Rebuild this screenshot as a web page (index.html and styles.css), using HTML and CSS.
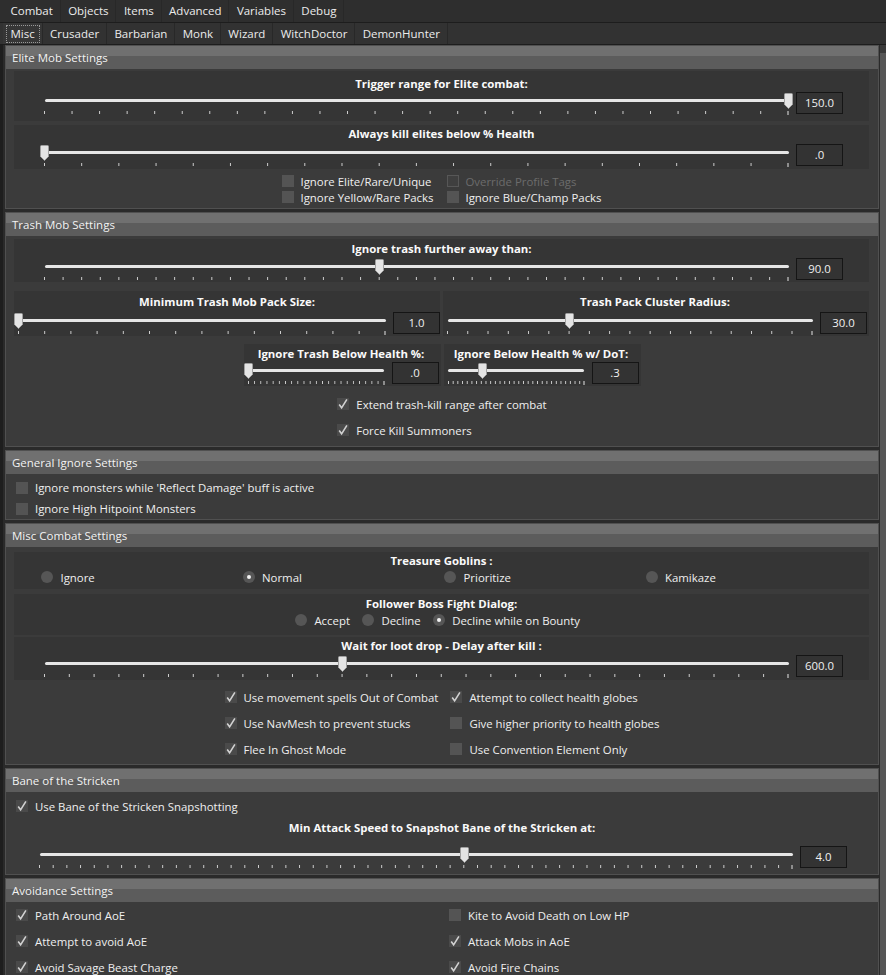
FILE: index.html
```html
<!DOCTYPE html>
<html>
<head>
<meta charset="utf-8">
<title>Combat Settings</title>
<link rel="stylesheet" href="styles.css">
</head>
<body>
<div class="tabbar bar1">
  <span class="tab">Combat</span><span class="tab">Objects</span><span class="tab">Items</span><span class="tab">Advanced</span><span class="tab">Variables</span><span class="tab">Debug</span>
</div>
<div class="tabbar bar2">
  <span class="tab sel">Misc</span><span class="tab">Crusader</span><span class="tab">Barbarian</span><span class="tab">Monk</span><span class="tab">Wizard</span><span class="tab">WitchDoctor</span><span class="tab">DemonHunter</span>
</div>

<div class="content">
  <div class="sections">

    <section class="sec">
      <div class="sec-h">Elite Mob Settings</div>
      <div class="sec-b b-elite">
        <div class="panel e1">
          <div class="ttl">Trigger range for Elite combat:</div>
          <div class="srow">
            <div class="slider" style="--n:27;--p:1"><div class="track"></div><div class="ticks"></div><svg class="knob" viewBox="0 0 9 16"><path d="M.5 1.5Q.5 .5 1.5 .5H7.5Q8.5 .5 8.5 1.5V11.5L4.5 15.5L.5 11.5Z"/></svg></div>
            <div class="val">150.0</div>
          </div>
        </div>
        <div class="panel e2">
          <div class="ttl">Always kill elites below % Health</div>
          <div class="srow">
            <div class="slider" style="--n:20;--p:0"><div class="track"></div><div class="ticks"></div><svg class="knob" viewBox="0 0 9 16"><path d="M.5 1.5Q.5 .5 1.5 .5H7.5Q8.5 .5 8.5 1.5V11.5L4.5 15.5L.5 11.5Z"/></svg></div>
            <div class="val">.0</div>
          </div>
        </div>
        <div class="echecks">
          <label class="chk"><span class="cb"></span>Ignore Elite/Rare/Unique</label>
          <label class="chk dis"><span class="cb"></span>Override Profile Tags</label>
          <label class="chk"><span class="cb"></span>Ignore Yellow/Rare Packs</label>
          <label class="chk"><span class="cb"></span>Ignore Blue/Champ Packs</label>
        </div>
      </div>
    </section>

    <section class="sec">
      <div class="sec-h">Trash Mob Settings</div>
      <div class="sec-b b-trash">
        <div class="panel t1">
          <div class="ttl">Ignore trash further away than:</div>
          <div class="srow">
            <div class="slider" style="--n:40;--p:.45"><div class="track"></div><div class="ticks"></div><svg class="knob" viewBox="0 0 9 16"><path d="M.5 1.5Q.5 .5 1.5 .5H7.5Q8.5 .5 8.5 1.5V11.5L4.5 15.5L.5 11.5Z"/></svg></div>
            <div class="val">90.0</div>
          </div>
        </div>
        <div class="t2">
          <div class="panel half hl">
            <div class="ttl">Minimum Trash Mob Pack Size:</div>
            <div class="srow">
              <div class="slider" style="--n:14;--p:0"><div class="track"></div><div class="ticks"></div><svg class="knob" viewBox="0 0 9 16"><path d="M.5 1.5Q.5 .5 1.5 .5H7.5Q8.5 .5 8.5 1.5V11.5L4.5 15.5L.5 11.5Z"/></svg></div>
              <div class="val">1.0</div>
            </div>
          </div>
          <div class="panel half hr">
            <div class="ttl">Trash Pack Cluster Radius:</div>
            <div class="srow">
              <div class="slider" style="--n:18;--p:.333"><div class="track"></div><div class="ticks"></div><svg class="knob" viewBox="0 0 9 16"><path d="M.5 1.5Q.5 .5 1.5 .5H7.5Q8.5 .5 8.5 1.5V11.5L4.5 15.5L.5 11.5Z"/></svg></div>
              <div class="val">30.0</div>
            </div>
          </div>
        </div>
        <div class="t3">
          <div class="panel small">
            <div class="ttl">Ignore Trash Below Health %:</div>
            <div class="srow">
              <div class="slider" style="--n:22;--p:0"><div class="track"></div><div class="ticks"></div><svg class="knob" viewBox="0 0 9 16"><path d="M.5 1.5Q.5 .5 1.5 .5H7.5Q8.5 .5 8.5 1.5V11.5L4.5 15.5L.5 11.5Z"/></svg></div>
              <div class="val">.0</div>
            </div>
          </div>
          <div class="panel small">
            <div class="ttl">Ignore Below Health % w/ DoT:</div>
            <div class="srow">
              <div class="slider" style="--n:29;--p:.25"><div class="track"></div><div class="ticks"></div><svg class="knob" viewBox="0 0 9 16"><path d="M.5 1.5Q.5 .5 1.5 .5H7.5Q8.5 .5 8.5 1.5V11.5L4.5 15.5L.5 11.5Z"/></svg></div>
              <div class="val">.3</div>
            </div>
          </div>
        </div>
        <div class="tchecks">
          <label class="chk"><span class="cb on"><svg viewBox="0 0 12 12"><path d="M2.2 6.6L4.6 9.8L9.9 1.3"/></svg></span>Extend trash-kill range after combat</label>
          <label class="chk"><span class="cb on"><svg viewBox="0 0 12 12"><path d="M2.2 6.6L4.6 9.8L9.9 1.3"/></svg></span>Force Kill Summoners</label>
        </div>
      </div>
    </section>

    <section class="sec">
      <div class="sec-h">General Ignore Settings</div>
      <div class="sec-b b-gen">
        <label class="chk"><span class="cb"></span>Ignore monsters while 'Reflect Damage' buff is active</label>
        <label class="chk"><span class="cb"></span>Ignore High Hitpoint Monsters</label>
      </div>
    </section>

    <section class="sec">
      <div class="sec-h">Misc Combat Settings</div>
      <div class="sec-b b-misc">
        <div class="panel m1">
          <div class="ttl">Treasure Goblins :</div>
          <div class="rgrid">
            <label class="rad"><span class="rb"></span>Ignore</label>
            <label class="rad"><span class="rb on"></span>Normal</label>
            <label class="rad"><span class="rb"></span>Prioritize</label>
            <label class="rad"><span class="rb"></span>Kamikaze</label>
          </div>
        </div>
        <div class="panel m2">
          <div class="ttl">Follower Boss Fight Dialog:</div>
          <div class="rflex">
            <label class="rad"><span class="rb"></span>Accept</label>
            <label class="rad"><span class="rb"></span>Decline</label>
            <label class="rad"><span class="rb on"></span>Decline while on Bounty</label>
          </div>
        </div>
        <div class="panel m3">
          <div class="ttl">Wait for loot drop - Delay after kill :</div>
          <div class="srow">
            <div class="slider" style="--n:30;--p:.4"><div class="track"></div><div class="ticks"></div><svg class="knob" viewBox="0 0 9 16"><path d="M.5 1.5Q.5 .5 1.5 .5H7.5Q8.5 .5 8.5 1.5V11.5L4.5 15.5L.5 11.5Z"/></svg></div>
            <div class="val">600.0</div>
          </div>
        </div>
        <div class="mchecks">
          <label class="chk"><span class="cb on"><svg viewBox="0 0 12 12"><path d="M2.2 6.6L4.6 9.8L9.9 1.3"/></svg></span>Use movement spells Out of Combat</label>
          <label class="chk"><span class="cb on"><svg viewBox="0 0 12 12"><path d="M2.2 6.6L4.6 9.8L9.9 1.3"/></svg></span>Attempt to collect health globes</label>
          <label class="chk"><span class="cb on"><svg viewBox="0 0 12 12"><path d="M2.2 6.6L4.6 9.8L9.9 1.3"/></svg></span>Use NavMesh to prevent stucks</label>
          <label class="chk"><span class="cb"></span>Give higher priority to health globes</label>
          <label class="chk"><span class="cb on"><svg viewBox="0 0 12 12"><path d="M2.2 6.6L4.6 9.8L9.9 1.3"/></svg></span>Flee In Ghost Mode</label>
          <label class="chk"><span class="cb"></span>Use Convention Element Only</label>
        </div>
      </div>
    </section>

    <section class="sec">
      <div class="sec-h">Bane of the Stricken</div>
      <div class="sec-b b-bane">
        <label class="chk bchk"><span class="cb on"><svg viewBox="0 0 12 12"><path d="M2.2 6.6L4.6 9.8L9.9 1.3"/></svg></span>Use Bane of the Stricken Snapshotting</label>
        <div class="ttl bttl">Min Attack Speed to Snapshot Bane of the Stricken at:</div>
        <div class="srow bsrow">
          <div class="slider" style="--n:55;--p:.565"><div class="track"></div><div class="ticks"></div><svg class="knob" viewBox="0 0 9 16"><path d="M.5 1.5Q.5 .5 1.5 .5H7.5Q8.5 .5 8.5 1.5V11.5L4.5 15.5L.5 11.5Z"/></svg></div>
          <div class="val">4.0</div>
        </div>
      </div>
    </section>

    <section class="sec">
      <div class="sec-h">Avoidance Settings</div>
      <div class="sec-b b-avoid">
        <label class="chk"><span class="cb on"><svg viewBox="0 0 12 12"><path d="M2.2 6.6L4.6 9.8L9.9 1.3"/></svg></span>Path Around AoE</label>
        <label class="chk"><span class="cb"></span>Kite to Avoid Death on Low HP</label>
        <label class="chk"><span class="cb on"><svg viewBox="0 0 12 12"><path d="M2.2 6.6L4.6 9.8L9.9 1.3"/></svg></span>Attempt to avoid AoE</label>
        <label class="chk"><span class="cb on"><svg viewBox="0 0 12 12"><path d="M2.2 6.6L4.6 9.8L9.9 1.3"/></svg></span>Attack Mobs in AoE</label>
        <label class="chk"><span class="cb on"><svg viewBox="0 0 12 12"><path d="M2.2 6.6L4.6 9.8L9.9 1.3"/></svg></span>Avoid Savage Beast Charge</label>
        <label class="chk"><span class="cb on"><svg viewBox="0 0 12 12"><path d="M2.2 6.6L4.6 9.8L9.9 1.3"/></svg></span>Avoid Fire Chains</label>
      </div>
    </section>

  </div>
  <div class="scroll"><div class="scroll-thumb"></div></div>
</div>
</body>
</html>
```

FILE: styles.css
```css
* { box-sizing: border-box; }
html, body { margin: 0; padding: 0; }
body {
  width: 886px;
  height: 975px;
  overflow: hidden;
  background: #2a2a2a;
  color: #efefef;
  font-family: "Open Sans", "Noto Sans", sans-serif;
  font-size: 11.4px;
}

/* tab bars */
.tabbar {
  display: flex;
  padding-left: 3px;
  white-space: nowrap;
}
.bar1 {
  height: 23px;
  background: #2e2e2e;
  border-bottom: 1px solid #1d1d1d;
}
.bar2 {
  height: 22px;
  background: #323232;
  border-bottom: 1px solid #1d1d1d;
}
.tab {
  position: relative;
  padding: 0 6.8px 0 7.5px;
  line-height: 22px;
  font-size: 11.5px;
  color: #ececec;
  border-right: 1px solid #282828;
}
.bar2 .tab { line-height: 21px; }
.tab.sel { background: #363636; }
.tab.sel::before {
  content: "";
  position: absolute;
  left: 3px; right: 2px; top: 2px; bottom: 1px;
  border: 1px dotted #9a9a9a;
}

/* content */
.content {
  display: flex;
  border-left: 3px solid #1e1e1e;
}
.sections {
  width: 874px;
  margin-left: 2px;
}
.scroll {
  width: 6px;
  margin-left: 1px;
  background: #3a3a3a;
  padding-top: 8px;
}
.scroll-thumb {
  height: 940px;
  background: #565656;
}

.sec {
  border: 1px solid #505050;
  background: #3b3b3b;
  margin-bottom: 3px;
}
.sec-h {
  height: 23px;
  line-height: 23px;
  padding-left: 6px;
  font-size: 11.5px;
  color: #f3f3f3;
  background: linear-gradient(#707070 0 10px, #5c5c5c 10px 100%);
}
.sec-b { position: relative; }

.b-elite { height: 139px; padding-top: 2px; }
.b-trash { height: 210px; padding-top: 3px; }
.b-gen { height: 45px; padding: 3px 0 0 10px; }
.b-misc { height: 217px; padding-top: 5px; }
.b-bane { height: 82px; padding-top: 6px; }
.b-avoid {
  height: 80px;
  padding-left: 10px;
  display: grid;
  grid-template-columns: 433px auto;
  grid-auto-rows: 26px;
  align-content: start;
}

.panel {
  background: #353535;
  margin: 0 9px 0 8px;
}
.ttl {
  text-align: center;
  font-weight: 700;
  line-height: 16px;
  color: #fafafa;
}

/* slider */
.srow {
  display: flex;
  align-items: flex-start;
  gap: 3px;
}
.slider {
  position: relative;
  flex: 1;
  height: 22px;
  padding: 7px 4px 0;
}
.track {
  height: 3px;
  background: #e6e6e6;
  border-radius: 2px;
  margin: 0 0.5px;
}
.ticks {
  position: relative;
  margin-top: 9px;
  height: 3px;
  background-image: linear-gradient(to right, #cfcfcf 0 1px, transparent 1px);
  background-size: calc((100% - 1px) / var(--n)) 100%;
  background-repeat: repeat-x;
}
.ticks::after {
  content: "";
  position: absolute;
  right: 0;
  top: 0;
  width: 2px;
  height: 4px;
  background: #8d8d8d;
}
.knob {
  position: absolute;
  top: 1px;
  left: calc((100% - 9px) * var(--p));
  width: 9px;
  height: 16px;
}
.knob path {
  fill: #e4e4e4;
  stroke: #a0a0a0;
  stroke-width: 1;
}
.val {
  width: 47px;
  height: 22px;
  border: 1px solid #151515;
  background: #333;
  text-align: center;
  line-height: 20px;
  color: #f0f0f0;
}

/* checkbox */
.chk {
  display: flex;
  align-items: center;
  white-space: nowrap;
  color: #efefef;
}
.cb {
  width: 12px;
  height: 12px;
  flex: none;
  background: #545454;
  margin-right: 7px;
}
.cb svg { display: block; width: 12px; height: 12px; }
.cb svg path {
  fill: none;
  stroke: #d2d2d2;
  stroke-width: 1.6;
}
.cb.on { background: #4a4a4a; }
.chk.dis { color: #6c6c6c; }
.chk.dis .cb {
  background: #3f3f3f;
  border: 1px solid #575757;
}

/* radios */
.rad {
  display: flex;
  align-items: center;
  white-space: nowrap;
}
.rb {
  width: 12px;
  height: 12px;
  border-radius: 50%;
  background: #565656;
  margin-right: 7.5px;
  flex: none;
  position: relative;
}
.rb.on::after {
  content: "";
  position: absolute;
  left: 4px; top: 4px;
  width: 4px; height: 4px;
  border-radius: 50%;
  background: #f2f2f2;
}

/* elite */
.e1 { padding: 5px 26px 7px; }
.e2 { margin-top: 4px; padding: 1px 26px 3px; }
.e2 .srow { margin-top: 2px; }
.echecks {
  margin-top: 4px;
  display: grid;
  grid-template-columns: auto auto;
  grid-auto-rows: 16px;
  justify-content: center;
  column-gap: 14px;
}
.echecks .chk .cb { margin-right: 6px; }

/* trash */
.t1 { padding: 2px 26px 2px; }
.t1 .srow { margin-top: 1px; }
.t2 {
  margin: 9px 9px 0 8px;
  display: grid;
  grid-template-columns: 1fr 1fr;
  column-gap: 3px;
}
.t2 .panel { margin: 0; }
.half { padding: 3px 0 2px 0; }
.half .srow { margin-top: 2px; }
.hr { padding-right: 2px; }
.t3 {
  margin-top: 8px;
  display: flex;
  justify-content: center;
  gap: 3px;
}
.t3 .panel { margin: 0; }
.small {
  width: 197px;
  padding: 2px 2px 2px 0;
}
.tchecks {
  margin-top: 5px;
  display: grid;
  justify-content: center;
  grid-auto-rows: 26px;
}

/* general */
.b-gen .chk { height: 21px; }

/* misc */
.m1 { padding: 1px 0 4px; }
.rgrid {
  display: grid;
  grid-template-columns: repeat(4, 201.5px);
  grid-auto-rows: 16px;
  padding-left: 27px;
}
.m2 { margin-top: 5px; padding: 2px 0 7px; }
.rflex {
  display: flex;
  justify-content: center;
  gap: 12px;
  height: 16px;
  padding-right: 8px;
}
.m3 { margin-top: 2px; padding: 1px 26px 3px; }
.m3 .srow { margin-top: 1px; }
.mchecks {
  margin-top: 4px;
  display: grid;
  grid-template-columns: auto auto;
  grid-auto-rows: 26px;
  justify-content: center;
  column-gap: 12px;
}

/* bane */
.bchk { padding-left: 10px; height: 16px; }
.bttl { margin-top: 6px; }
.bsrow {
  margin: 10px 9px 0 8px;
  padding: 0 22px 0 21px;
}
```
